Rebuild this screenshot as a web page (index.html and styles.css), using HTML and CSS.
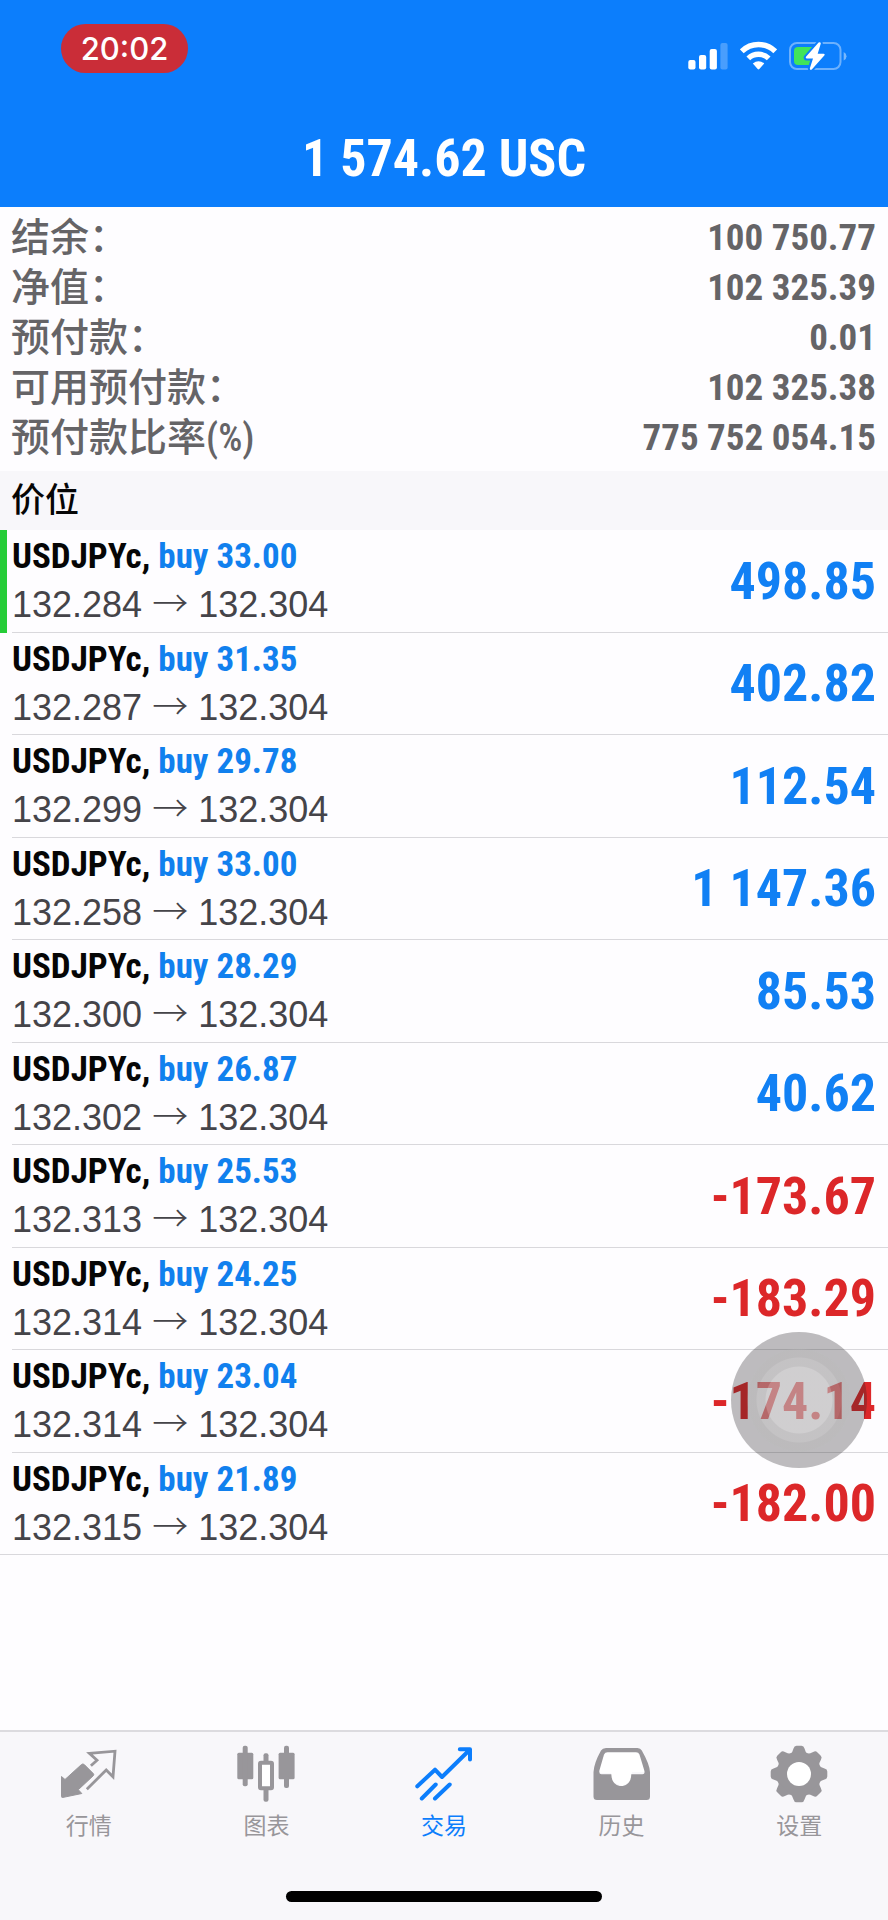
FILE: index.html
```html
<!DOCTYPE html>
<html lang="zh-CN">
<head>
<meta charset="utf-8">
<meta name="viewport" content="width=device-width, initial-scale=1">
<title>交易</title>
<link rel="stylesheet" href="styles.css">
</head>
<body>
<div class="app">
  <header class="header">
    <div class="status">
      <time class="clock">20:02</time>
      <div class="indicators">
        <svg width="40" height="30" viewBox="0 0 40 30" fill="#fff" aria-hidden="true">
          <rect x="0.3" y="19" width="7.2" height="9.5" rx="2"/>
          <rect x="11" y="14" width="7.2" height="14.5" rx="2"/>
          <rect x="21.7" y="8" width="7.2" height="20.5" rx="2"/>
          <rect x="32.4" y="2" width="7.2" height="26.5" rx="2" opacity=".25"/>
        </svg>
        <svg width="37" height="30" viewBox="0 0 37 30" aria-hidden="true">
          <g fill="none" stroke="#fff" stroke-width="5.4">
            <path d="M1.800 10.300a24 24 0 0 1 33.400 0"/>
            <path d="M8.300 17.400a14.800 14.800 0 0 1 20.400 0"/>
          </g>
          <path d="M12.800 22.500Q18.500 18 24.200 22.500L19.300 28Q18.500 28.900 17.700 28Z" fill="#fff"/>
        </svg>
        <svg width="58" height="30" viewBox="0 0 58 30" aria-hidden="true">
          <rect x="1" y="2" width="50.500" height="26" rx="7" fill="none" stroke="#fff" stroke-opacity=".4" stroke-width="2"/>
          <path d="M54.700 11v8.500q2.800-1.200 2.800-4.200t-2.800-4.300z" fill="#fff" opacity=".45"/>
          <path d="M9 6h15v18H9q-4 0-4-4V10q0-4 4-4z" fill="#41e45a"/>
          <path d="M29.600 1.500 17 15.800q-.9 1.600.8 1.600h6.200L20.800 27.500q.3 2.200 2 .9L35.500 14.300q.8-1.500-.8-1.600h-6L31.800 2.600q-.2-2-2.200-1.100z" fill="#fff" stroke="#0c7efc" stroke-width="4" paint-order="stroke"/>
        </svg>
      </div>
    </div>
    <h1 class="total">1 574.62 USC</h1>
  </header>

  <main class="content">
    <dl class="summary">
      <div class="summary-row"><dt>结余：</dt><dd>100 750.77</dd></div>
      <div class="summary-row"><dt>净值：</dt><dd>102 325.39</dd></div>
      <div class="summary-row"><dt>预付款：</dt><dd>0.01</dd></div>
      <div class="summary-row"><dt>可用预付款：</dt><dd>102 325.38</dd></div>
      <div class="summary-row"><dt>预付款比率<span class="unit">(%)</span></dt><dd>775 752 054.15</dd></div>
    </dl>
    <h2 class="section">价位</h2>
    <ul class="positions">
      <li class="position marked"><div class="deal"><p class="symbol">USDJPYc, <span class="side">buy 33.00</span></p><p class="prices">132.284 <span class="arrow">→</span> 132.304</p></div><span class="profit">498.85</span></li>
      <li class="position"><div class="deal"><p class="symbol">USDJPYc, <span class="side">buy 31.35</span></p><p class="prices">132.287 <span class="arrow">→</span> 132.304</p></div><span class="profit">402.82</span></li>
      <li class="position"><div class="deal"><p class="symbol">USDJPYc, <span class="side">buy 29.78</span></p><p class="prices">132.299 <span class="arrow">→</span> 132.304</p></div><span class="profit">112.54</span></li>
      <li class="position"><div class="deal"><p class="symbol">USDJPYc, <span class="side">buy 33.00</span></p><p class="prices">132.258 <span class="arrow">→</span> 132.304</p></div><span class="profit">1 147.36</span></li>
      <li class="position"><div class="deal"><p class="symbol">USDJPYc, <span class="side">buy 28.29</span></p><p class="prices">132.300 <span class="arrow">→</span> 132.304</p></div><span class="profit">85.53</span></li>
      <li class="position"><div class="deal"><p class="symbol">USDJPYc, <span class="side">buy 26.87</span></p><p class="prices">132.302 <span class="arrow">→</span> 132.304</p></div><span class="profit">40.62</span></li>
      <li class="position"><div class="deal"><p class="symbol">USDJPYc, <span class="side">buy 25.53</span></p><p class="prices">132.313 <span class="arrow">→</span> 132.304</p></div><span class="profit loss">-173.67</span></li>
      <li class="position"><div class="deal"><p class="symbol">USDJPYc, <span class="side">buy 24.25</span></p><p class="prices">132.314 <span class="arrow">→</span> 132.304</p></div><span class="profit loss">-183.29</span></li>
      <li class="position"><div class="deal"><p class="symbol">USDJPYc, <span class="side">buy 23.04</span></p><p class="prices">132.314 <span class="arrow">→</span> 132.304</p></div><span class="profit loss">-174.14</span><button class="touch" type="button" aria-label="AssistiveTouch"></button></li>
      <li class="position"><div class="deal"><p class="symbol">USDJPYc, <span class="side">buy 21.89</span></p><p class="prices">132.315 <span class="arrow">→</span> 132.304</p></div><span class="profit loss">-182.00</span></li>
    </ul>
  </main>

  <footer class="footer">
    <nav class="tabs">
      <a class="tab" href="#quotes">
        <svg width="60" height="60" viewBox="0 0 60 60" aria-hidden="true">
          <path d="M2.500 32.500 6 35.500 22.500 20.500Q23.900 19.300 25.300 20.600L34.300 29.600Q35.300 30.700 34.200 31.800L19.300 45.700 22.800 49.500 3.500 53.500Q2.500 53.500 2.500 52.500Z" fill="currentColor" stroke="currentColor" stroke-linejoin="round"/>
          <path d="M31.900 21.800 38 16.300 30.400 9.400 56 7.200 54 32.800 47.200 26 27.800 45.300" fill="none" stroke="currentColor" stroke-width="2.800"/>
        </svg>
        <span>行情</span>
      </a>
      <a class="tab" href="#charts">
        <svg width="60" height="60" viewBox="0 0 60 60" fill="currentColor" aria-hidden="true">
          <rect x="1.300" y="8.700" width="16" height="26.600" rx="1.500"/>
          <rect x="6.700" y="1.700" width="5" height="40.600" rx="2"/>
          <rect x="42.600" y="8.700" width="16" height="26.600" rx="1.500"/>
          <rect x="48" y="1.700" width="5" height="42.300" rx="2"/>
          <rect x="27.500" y="9.300" width="5" height="10" rx="2"/>
          <rect x="27.500" y="44" width="5" height="13.700" rx="2"/>
          <rect x="24" y="18.700" width="12" height="25.600" rx="1" fill="#fff" stroke="currentColor" stroke-width="4"/>
        </svg>
        <span>图表</span>
      </a>
      <a class="tab current" href="#trade" aria-current="page">
        <svg width="60" height="60" viewBox="0 0 60 60" fill="none" stroke="currentColor" stroke-width="4" stroke-linecap="round" stroke-linejoin="round" aria-hidden="true">
          <path d="M3.300 42.300 21 25.700 28 33 55.500 6M45.800 5.300H56V15.500M7.800 54.500 21.700 40.500M21 54.500 35.700 40.500"/>
        </svg>
        <span>交易</span>
      </a>
      <a class="tab" href="#history">
        <svg width="60" height="60" viewBox="0 0 60 60" fill="currentColor" aria-hidden="true">
          <path d="M14.500 6H45L54 28H40L38 38 30 42 21 38 19 29H5Z" fill="#fff"/>
          <path fill-rule="evenodd" d="M14 4H45.500Q48.500 4 49.800 6.500 57.500 20 58 28V52.500Q58 56 54.500 56H5Q1.500 56 1.500 52.500V28Q2 19 9 6.500 10.500 4 14 4ZM15.500 8.300Q13 8.300 12 10.600L7.400 26.500Q6.800 30.300 9.500 30.300H19.300C19.300 46 39.300 46 39.300 30.300H50.500Q53.300 30.300 52.300 26.500L47.500 10.600Q46.600 8.300 44 8.300Z"/>
        </svg>
        <span>历史</span>
      </a>
      <a class="tab" href="#settings">
        <svg width="60" height="60" viewBox="0 0 60 60" fill="currentColor" aria-hidden="true">
          <defs><path id="tooth" d="M21.500 10Q23.700 8 24.500 4.500 25.200 1.700 27.500 1.700H32.500Q34.800 1.700 35.500 4.500 36.300 8 38.500 10Z"/></defs>
          <circle cx="30" cy="30" r="22.500"/>
          <use href="#tooth"/>
          <use href="#tooth" transform="rotate(45 30 30)"/>
          <use href="#tooth" transform="rotate(90 30 30)"/>
          <use href="#tooth" transform="rotate(135 30 30)"/>
          <use href="#tooth" transform="rotate(180 30 30)"/>
          <use href="#tooth" transform="rotate(225 30 30)"/>
          <use href="#tooth" transform="rotate(270 30 30)"/>
          <use href="#tooth" transform="rotate(315 30 30)"/>
          <circle cx="30" cy="30" r="12" fill="#fff"/>
        </svg>
        <span>设置</span>
      </a>
    </nav>
    <div class="home"></div>
  </footer>
</div>
</body>
</html>
```
FILE: styles.css
```css
* { box-sizing: border-box; }

body, h1, h2, p, ul, dl, dd { margin: 0; padding: 0; }

body {
  background: #fefdff;
  color: #060606;
  font-family: "Liberation Sans", "Noto Sans CJK SC", sans-serif;
}

.app {
  min-height: 100vh;
  display: flex;
  flex-direction: column;
}

.header {
  background: #0c7efc;
  color: #fff;
}

.status {
  display: flex;
  justify-content: space-between;
  padding: 24px 41px 0 61px;
}

.clock {
  width: 127px;
  border-radius: 25px;
  background: #ca2d38;
  font: 500 31px/49px Inter, sans-serif;
  text-align: center;
}

.indicators {
  display: flex;
  gap: 12px;
  padding-top: 17px;
}

.total, .summary dd, .symbol, .profit {
  font-family: "Roboto Condensed", "Liberation Sans", sans-serif;
  font-weight: 700;
}

.total {
  padding: 60px 0 22px;
  font-size: 52px;
  line-height: 52px;
  text-align: center;
}

.content { flex: 1; }

.summary {
  padding: 6px 12px 8px 11px;
  color: #656467;
}

.summary-row {
  display: flex;
  justify-content: space-between;
  line-height: 50px;
}

.summary dt {
  font-size: 39px;
  font-weight: 500;
}

.summary dd { font-size: 37px; }

.unit {
  font-family: "Roboto Condensed", "Liberation Sans", sans-serif;
  font-size: 38px;
  line-height: 1;
}

.section {
  padding: 0 11px;
  background: #f8f7fa;
  font-size: 34px;
  font-weight: 500;
  line-height: 59px;
}

.positions {
  display: grid;
  grid-auto-rows: 1fr;
  min-height: 1025px;
  list-style: none;
}

.position {
  position: relative;
  display: flex;
  align-items: center;
  justify-content: space-between;
  padding-right: 12px;
  padding-left: 12px;
  background: linear-gradient(#d9d8dc, #d9d8dc) 12px 100% / 100% 1px no-repeat;
}

.position:last-child { background-position: 0 100%; }

.marked { box-shadow: inset 7px 0 #26cd38; }

.symbol {
  font-size: 35px;
  line-height: 48px;
}

.side { color: #1180ee; }

.prices {
  color: #454449;
  font-size: 36px;
  line-height: 48px;
}

.arrow {
  font-family: "Noto Sans CJK SC", sans-serif;
  font-weight: 300;
  line-height: 1;
}

.profit {
  color: #1180f4;
  font-size: 52px;
}

.loss { color: #dc2729; }

.touch {
  position: absolute;
  top: -18px;
  right: 21px;
  width: 136px;
  height: 136px;
  border: 0;
  border-radius: 50%;
  background: radial-gradient(circle, rgba(225, 225, 225, .5) 33px, rgba(205, 205, 205, .4) 34px 42px, rgba(185, 185, 185, .4) 43px 50px, rgba(110, 110, 110, 0) 52px), rgba(40, 38, 40, .3);
}

.footer {
  border-top: 2px solid #dcdbdf;
  background: #f8f7fa;
}

.tabs {
  display: grid;
  grid-template-columns: repeat(5, 1fr);
}

.tab {
  display: flex;
  flex-direction: column;
  align-items: center;
  padding-top: 12px;
  color: #98969a;
  font-size: 23px;
  line-height: 44px;
  text-decoration: none;
}

.current { color: #0c7efc; }

.home {
  width: 316px;
  height: 11px;
  margin: 43px auto 18px;
  border-radius: 6px;
  background: #000;
}
```
